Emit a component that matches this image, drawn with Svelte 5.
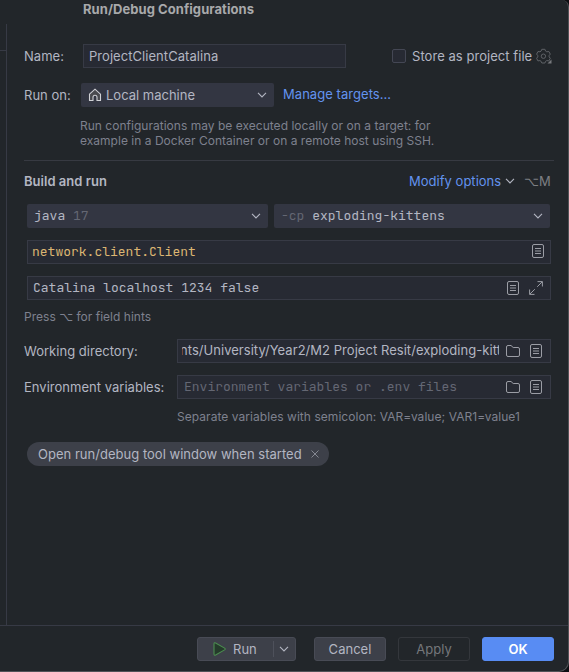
<script>
  let name = 'ProjectClientCatalina';
  let mainClass = 'network.client.Client';
  let args = 'Catalina localhost 1234 false';
  let directory = 'nts/University/Year2/M2 Project Resit/exploding-kitt';
</script>

{#snippet chevron()}
  <svg class="chevron" width="10" height="6" viewBox="0 0 10 6"><path d="M1 .9 5 4.9 9 .9" /></svg>
{/snippet}

{#snippet doc()}
  <svg class="icon" width="12" height="14" viewBox="0 0 12 14">
    <rect x=".5" y=".5" width="11" height="13" rx="1.5" />
    <path d="M3 4.5h6M3 7h6M3 9.5h6" />
  </svg>
{/snippet}

{#snippet folder()}
  <svg class="icon" width="14" height="12" viewBox="0 0 14 12">
    <path d="M.5 2A1.5 1.5 0 0 1 2 .5h3L7.2 2.5H12A1.5 1.5 0 0 1 13.5 4v6a1.5 1.5 0 0 1-1.5 1.5H2A1.5 1.5 0 0 1 .5 10Z" />
  </svg>
{/snippet}

<div class="backdrop">
  <div class="dialog">
    <header>Run/Debug Configurations</header>
    <div class="body">
      <aside></aside>
      <main>
        <div class="row name-row">
          <span class="label name-label">Name:</span>
          <div class="field name-field"><span class="name-text">{name}</span></div>
          <span class="checkbox"></span>
          <span class="store">Store as project file</span>
          <svg class="gear" width="16" height="16" viewBox="0 0 16 16">
            <path d="m5.8 1.3 3.1 0 .7 1.8 1.2.7 2-.3 1.5 2.6-1.2 1.5v1.2l1.2 1.5-1.5 2.6-2-.3-1.2.7-.7 1.7H5.8l-.7-1.7-1.2-.7-2 .3L.6 10.3l1.2-1.5V7.6L.6 6.1l1.4-2.6 2 .3 1.1-.7Z" />
            <circle cx="7.4" cy="8.2" r="2.2" />
            <path class="corner" d="M15.5 11.5v4h-4Z" />
          </svg>
        </div>
        <div class="row target-row">
          <span class="label run-label">Run on:</span>
          <div class="combo target">
            <svg class="home" width="14" height="14" viewBox="0 0 14 14">
              <path d="M1.5 6.2 7 1.2l5.5 5V12.5H9V9.2a2 2 0 0 0-4 0v3.3H1.500Z" />
            </svg>
            <span class="machine">Local machine</span>
            {@render chevron()}
          </div>
          <span class="link manage">Manage targets...</span>
        </div>
        <p class="hint target-hint">
          Run configurations may be executed locally or on a target: for<br />
          example in a Docker Container or on a remote host using SSH.
        </p>
        <div class="rule"></div>
        <div class="row build-row">
          <b>Build and run</b>
          <span class="link modify">Modify options</span>
          {@render chevron()}
          <span class="shortcut"><i>⌥</i>M</span>
        </div>
        <div class="row combos">
          <div class="combo java"><span class="mono">java <em>17</em></span>{@render chevron()}</div>
          <div class="combo cp"><span class="mono"><em>-cp</em> exploding-kittens</span>{@render chevron()}</div>
        </div>
        <div class="field wide main-class"><span class="mono">{mainClass}</span>{@render doc()}</div>
        <div class="field wide args">
          <span class="mono">{args}</span>
          {@render doc()}
          <svg class="icon expand" width="14" height="14" viewBox="0 0 14 14">
            <path d="M8.5.6h4.9v4.9M13.2.8 8.2 5.8M5.8 8.2l-5 5M.6 8.5v4.9h4.9" />
          </svg>
        </div>
        <div class="hint press">Press <i>⌥</i> for field hints</div>
        <div class="row dir-row">
          <span class="label long">Working directory:</span>
          <div class="field path">
            <span class="dir"><span>{directory}</span></span>
            {@render folder()}{@render doc()}
          </div>
        </div>
        <div class="row env-row">
          <span class="label long env-label">Environment variables:</span>
          <div class="field path">
            <span class="mono placeholder">Environment variables or .env files</span>
            {@render folder()}{@render doc()}
          </div>
        </div>
        <div class="hint separate">Separate variables with semicolon: VAR=value; VAR1=value1</div>
        <div class="pill">
          <span>Open run/debug tool window when started</span>
          <svg width="8" height="8" viewBox="0 0 8 8"><path d="m.5.5 7 7m0-7-7 7" /></svg>
        </div>
      </main>
    </div>
    <footer>
      <div class="button run">
        <svg width="13" height="14" viewBox="0 0 13 14">
          <path d="M1 1.9C1 .8 1.8.5 2.6.9l9 5.2c.8.5.8 1.3 0 1.8l-9 5.2C1.8 13.5 1 13.2 1 12.1Z" />
        </svg>
        <span>Run</span>
        <div class="split">{@render chevron()}</div>
      </div>
      <div class="button cancel">Cancel</div>
      <div class="button apply">Apply</div>
      <div class="button ok">OK</div>
    </footer>
  </div>
</div>

<style>
  .backdrop {
    width: 569px;
    height: 672px;
    background: #0d0e12;
    overflow: hidden;
    font: 13px/16px Inter, 'Liberation Sans', sans-serif;
    letter-spacing: .02px;
    color: #b3b6c2;
  }
  .backdrop * { box-sizing: border-box; }
  .dialog {
    width: 569px;
    height: 672px;
    display: flex;
    flex-direction: column;
    background: #22262a;
    border-right: 1px solid #515357;
    border-bottom: 1px solid #515357;
    border-radius: 0 7px 10px 0;
    white-space: nowrap;
  }
  header {
    height: 24px;
    padding: 1px 0 0 83px;
    font-weight: 700;
    letter-spacing: .06px;
    color: #a8a9ab;
  }
  .body { display: flex; height: 601px; }
  aside { width: 7px; border-right: 1px solid #373a45; }
  aside::before { content: ''; display: block; height: 26px; border-bottom: 1px solid #373a45; }
  main { flex: 1; padding: 20px 0 0 17px; }
  .row { display: flex; align-items: center; height: 24px; }
  .field, .combo { display: flex; align-items: center; height: 24px; overflow: hidden; }
  .field { background: #272a33; border: 1px solid #373a45; }
  .combo { background: #333642; border-radius: 2px; }
  .combo .chevron { margin-left: auto; }
  .chevron { fill: none; stroke: #b3b6c2; stroke-width: 1.1; flex: none; }
  .icon { fill: none; stroke: #9b9da5; stroke-width: 1; flex: none; }
  .mono { font: 13px/16px 'JetBrains Mono', 'DejaVu Sans Mono', monospace; letter-spacing: 0; white-space: pre; }
  em { font-style: normal; color: #646773; }
  i { font-family: 'DejaVu Sans', sans-serif; font-style: normal; }
  .link { color: #6393ef; }
  .hint { font-size: 12px; line-height: 15px; color: #7e818e; margin: 0; }

  .name-label { width: 59px; padding-bottom: 1px; }
  .name-field { width: 263px; padding: 0 0 1px 5px; }
  .name-text { letter-spacing: .05px; }
  .checkbox { width: 14px; height: 14px; margin-left: 46px; background: #272a33; border: 1px solid #444754; border-radius: 2px; }
  .store { width: 120px; margin-left: 6px; letter-spacing: .05px; }
  .gear { margin-left: 4px; fill: none; stroke: #5f6267; stroke-width: 1; }
  .corner { fill: #77797d; stroke: none; }

  .target-row { margin-top: 15px; }
  .run-label { width: 57px; }
  .target { width: 193px; padding: 0 7px; }
  .home { fill: #494a4f; stroke: #d0d1d6; stroke-width: 1.1; }
  .machine { margin-left: 4px; letter-spacing: 0; }
  .manage { margin: -2px 0 0 9px; letter-spacing: .05px; }
  .target-hint { margin: 11px 0 0 56px; height: 31px; }
  .rule { width: 530px; height: 1px; margin-top: 11px; background: #373a42; }
  .build-row { margin-top: 8px; }
  .build-row b { width: 385px; font-weight: 600; }
  .modify { width: 92px; }
  .build-row .chevron { margin-left: 4px; }
  .shortcut { margin-left: 9px; color: #7d7f83; }

  .combos { margin: 11px 0 0 3px; gap: 6px; }
  .java { width: 241px; padding: 0 7px; }
  .cp { width: 276px; padding: 0 7px; }
  .wide { width: 524px; margin: 12px 0 0 3px; padding: 0 6px 0 4px; }
  .main-class { color: #dcb672; }
  .wide .mono { flex: 1; }
  .main-class .icon { margin-bottom: 2px; }
  .args { padding: 0 7px 0 5px; }
  .expand { margin-left: 10px; }
  .press { margin-top: 9px; height: 15px; }
  .press i { line-height: 12px; }
  .dir-row { margin-top: 15px; }
  .env-row { margin-top: 12px; }
  .long { width: 153px; }
  .path { width: 374px; padding: 0 8px 0 6px; }
  .dir { width: 317px; overflow: hidden; margin: -2px 0 0 -2px; letter-spacing: .04px; }
  .dir span { margin-left: -2px; }
  .path .mono { width: 315px; }
  .path .icon { margin-left: 7px; }
  .path .icon + .icon { margin-left: 10px; }
  .placeholder { color: #646773; }
  .separate { margin: 10px 0 0 153px; height: 15px; letter-spacing: .05px; }
  .pill {
    display: flex;
    align-items: center;
    width: 302px;
    height: 24px;
    margin: 18px 0 0 3px;
    padding: 0 10px 0 11px;
    justify-content: space-between;
    border-radius: 12px;
    background: #3d4049;
  }
  .pill svg { fill: none; stroke: #858892; stroke-width: 1; }

  footer { display: flex; height: 46px; padding: 11px 0 0 197px; border-top: 1px solid #373a45; }
  .button {
    display: flex;
    align-items: center;
    justify-content: center;
    width: 72px;
    height: 24px;
    border-radius: 3px;
    border: 1px solid #484b55;
    background: #3d4049;
  }
  .run { width: 99px; justify-content: flex-start; padding-left: 15px; }
  .run > svg { fill: #253b2b; stroke: #4c8c50; stroke-width: 1.1; }
  .run > span { width: 40px; margin-left: 7px; }
  .split { display: flex; align-items: center; height: 16px; border-left: 1px solid #4e515b; padding-left: 5px; }
  .cancel { margin-left: 18px; }
  .apply { margin-left: 12px; background: none; border-color: #34373c; color: #75777b; }
  .ok { margin-left: 12px; background: #588cf3; border-color: #588cf3; color: #fff; font-weight: 600; }
</style>
